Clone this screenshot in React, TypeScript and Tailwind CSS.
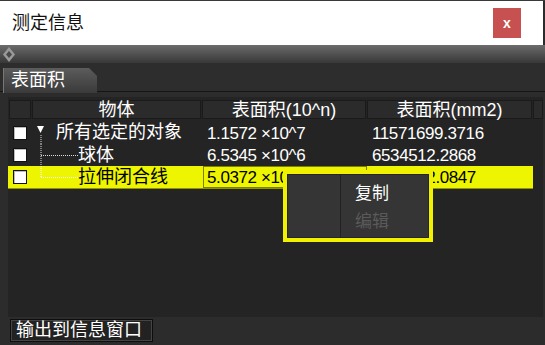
import React from "react";

const cjk = { fontFamily: '"Liberation Sans", "Noto Sans CJK SC", sans-serif' };

function Check() {
  return <div className="w-[14px] h-[14px] bg-white border border-[#111] shadow-[inset_1px_1px_0_#bbb]" />;
}

function Tree({ kind }: { kind: 0 | 1 | 2 }) {
  return (
    <svg width="46" height="23" className="shrink-0" viewBox="0 0 46 23">
      {kind === 0 && (
        <>
          <polygon points="5,5 12,5 8.5,12" fill="#fff" />
          <line x1="9" y1="14" x2="9" y2="23" stroke="#ddd" strokeWidth="1" strokeDasharray="1 1" />
        </>
      )}
      {kind === 1 && (
        <>
          <line x1="9" y1="0" x2="9" y2="22" stroke="#ddd" strokeWidth="1" strokeDasharray="1 1" />
          <line x1="9" y1="11.5" x2="46" y2="11.5" stroke="#ddd" strokeWidth="1" strokeDasharray="1 1" />
        </>
      )}
      {kind === 2 && (
        <>
          <line x1="9" y1="0" x2="9" y2="11" stroke="#fff" strokeWidth="1" strokeDasharray="1 1" />
          <line x1="9" y1="11.5" x2="46" y2="11.5" stroke="#fff" strokeWidth="1" strokeDasharray="1 1" />
        </>
      )}
    </svg>
  );
}

export default function App() {
  return (
    <div className="w-[545px] h-[345px] bg-[#2c2c2c] overflow-hidden relative flex flex-col" style={cjk}>
      <div className="h-px bg-[#3a3a3a]" />
      <div className="h-[44px] bg-white mr-[2px] flex items-center justify-between pl-[12px] pr-[22px]">
        <span className="text-[18px] text-[#111]">测定信息</span>
        <div className="w-[28px] h-[30px] bg-[#c75050] flex items-center justify-center text-white font-bold text-[14px] leading-none pb-px">x</div>
      </div>
      <div className="h-[18px] bg-gradient-to-b from-[#6c6c6c] to-[#383838] flex items-center pl-[3px]">
        <svg width="12" height="15" viewBox="0 0 12 15">
          <polygon points="6,0 12,7.5 6,15 0,7.5" fill="#9a9a9a" />
          <polygon points="6,4 9,7.5 6,11 3,7.5" fill="#4a4a4a" />
        </svg>
      </div>
      <div className="h-[30px] flex items-end bg-[#2d2d2d]">
        <div className="w-[3px] h-px bg-[#151515] mb-[1px]" />
        <div className="h-[25px] w-[94px] bg-gradient-to-b from-[#5c5c5c] to-[#3a3a3a] border-l border-[#777] [clip-path:polygon(0_0,86px_0,94px_8px,94px_100%,0_100%)] flex items-center pl-[7px] text-white text-[18px]">
          表面积
        </div>
        <div className="flex-1 h-px bg-[#151515] mb-[1px]" />
      </div>
      <div className="h-[4px]" />
      <div className="ml-[8px] mr-[2px] h-[220px] bg-[#242424] flex flex-col relative">
        <div className="flex gap-px pt-[3px] h-[22px] pl-px text-white text-[18px]">
          <div className="w-[22px] h-[19px] bg-[#2b2b2b] border border-[#1a1a1a]" />
          <div className="w-[169px] h-[19px] bg-[#2b2b2b] border border-[#1a1a1a] flex items-center justify-center leading-none">物体</div>
          <div className="w-[164px] h-[19px] bg-[#2b2b2b] border border-[#1a1a1a] flex items-center justify-center leading-none">表面积(10^n)</div>
          <div className="w-[165px] h-[19px] bg-[#2b2b2b] border border-[#1a1a1a] flex items-center justify-center leading-none">表面积(mm2)</div>
          <div className="w-[10px] h-[19px] bg-[#2b2b2b] border border-[#1a1a1a]" />
        </div>
        <div className="h-[2px]" />
        <div className="flex h-[23px] items-center text-white text-[17px] tracking-[-0.4px]">
          <div className="w-[24px] pl-[5px]"><Check /></div>
          <div className="w-[171px] flex items-center"><Tree kind={0} /><span className="text-[18px] tracking-normal -ml-[22px]">所有选定的对象</span></div>
          <div className="w-[164px] pl-[4px] pt-[2px]">1.1572 ×10^7</div>
          <div className="w-[166px] pl-[5px] pt-[2px]">11571699.3716</div>
        </div>
        <div className="flex h-[22px] items-center text-white text-[17px] tracking-[-0.4px]">
          <div className="w-[24px] pl-[5px]"><Check /></div>
          <div className="w-[171px] flex items-center"><Tree kind={1} /><span className="text-[18px] tracking-normal">球体</span></div>
          <div className="w-[164px] pl-[4px] pt-[2px]">6.5345 ×10^6</div>
          <div className="w-[166px] pl-[5px] pt-[2px]">6534512.2868</div>
        </div>
        <div className="flex h-[23px] w-[525px] items-center text-black text-[17px] tracking-[-0.4px] bg-[#eef500] border-b border-[#8f9400]">
          <div className="w-[24px] pl-[5px]"><Check /></div>
          <div className="w-[171px] flex items-center"><Tree kind={2} /><span className="text-[18px] tracking-normal">拉伸闭合线</span></div>
          <div className="w-[164px] h-[22px] pl-[3px] pt-[2px] flex items-center border border-[#7d8000]">5.0372 ×10^5</div>
          <div className="w-[166px] pl-[5px] pt-[2px]">5037222.0847</div>
        </div>
        <div className="absolute left-[275px] top-[73px] w-[150px] h-[72px] bg-[#f0f000] p-[4px]">
          <div className="w-full h-full bg-[#353535] border border-[#252525] flex">
            <div className="w-[53px] border-r border-[#232323]" />
            <div className="flex-1 flex flex-col pl-[14px] text-[17px]">
              <div className="h-[34px] flex items-center pt-[4px] text-white">复制</div>
              <div className="h-[26px] flex items-center text-[#5a5a5a]">编辑</div>
            </div>
          </div>
        </div>
      </div>
      <div className="flex-1 pl-[10px] pt-[2px]">
        <div className="w-[143px] h-[23px] bg-[#222] border border-[#0e0e0e] shadow-[inset_0_0_0_1px_#444] flex items-center pl-[5px] text-white text-[18px]">
          输出到信息窗口
        </div>
      </div>
    </div>
  );
}
